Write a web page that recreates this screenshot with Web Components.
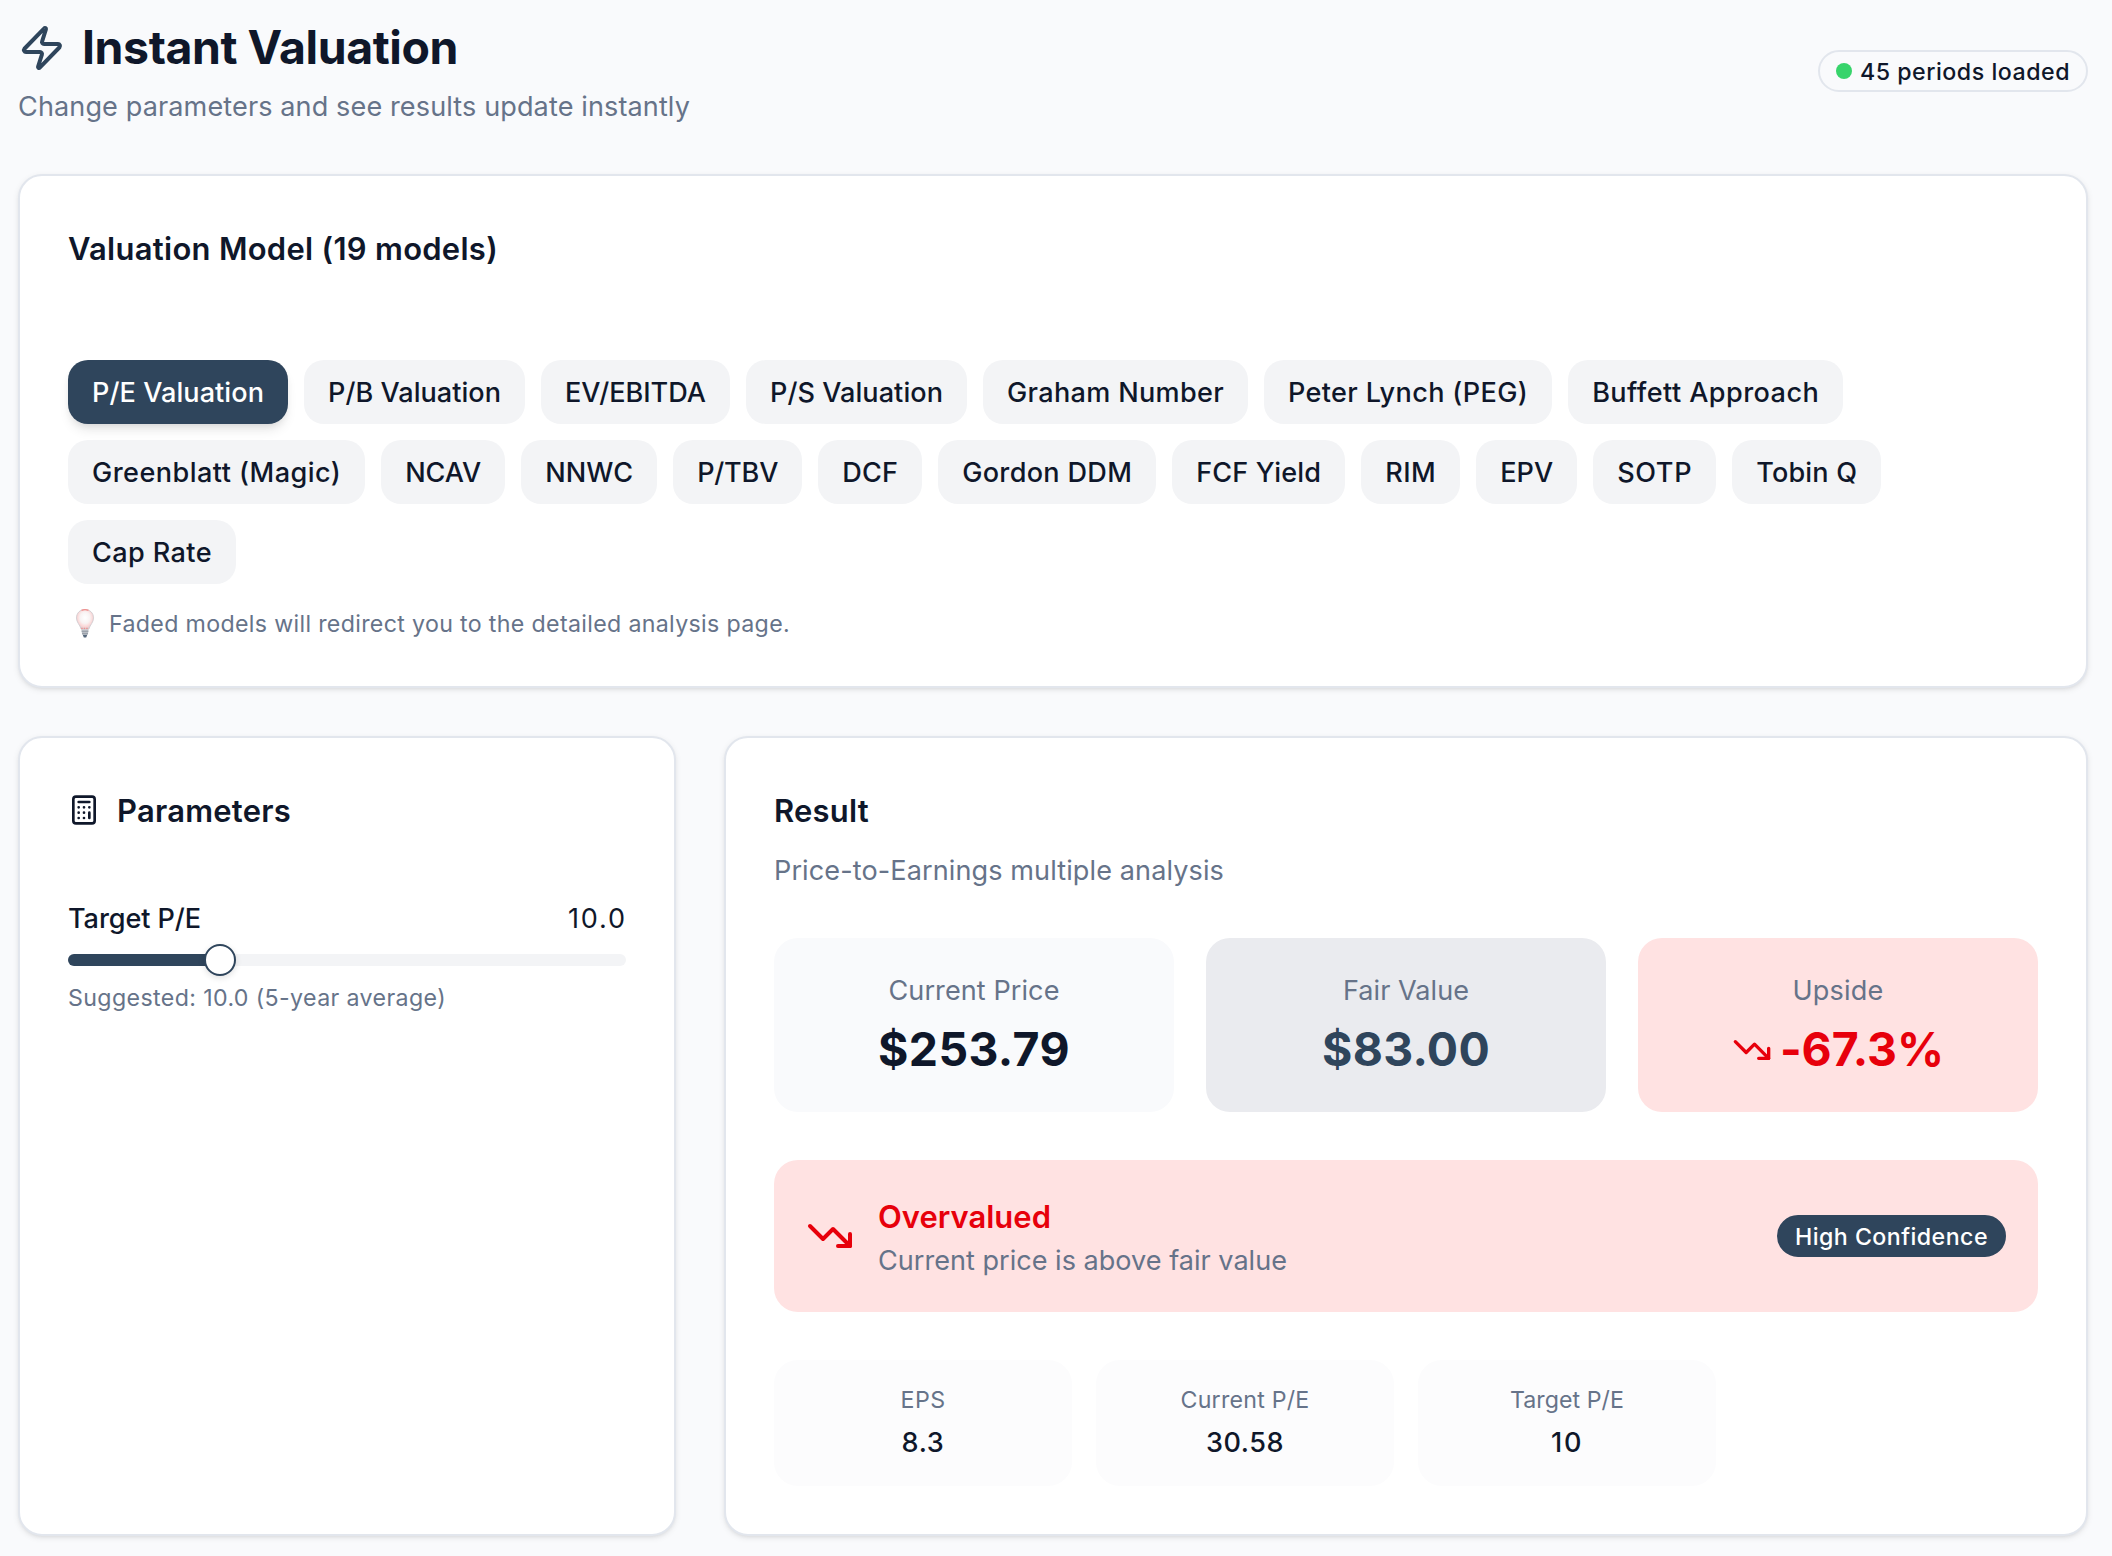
<!DOCTYPE html>
<html lang="en">
<head>
<meta charset="UTF-8">
<title>Instant Valuation</title>
<style>
  :root {
    --bg: #f9fafc;
    --card: #ffffff;
    --border: #e2e6ed;
    --text: #0f172a;
    --muted: #667389;
    --primary: #2f455c;
    --chip: #f3f4f6;
    --danger: #e7000b;
    --danger-bg: #ffe2e2;
  }

  body {
    margin: 0;
    background: var(--bg);
    color: var(--text);
    font-family: Inter, "Liberation Sans", sans-serif;
  }
</style>
</head>
<body>
<valuation-page></valuation-page>

<script>
/* Text line. Tracks its letters so the line takes the given advance width. */
class UiText extends HTMLElement {
  constructor() {
    super();
    this.attachShadow({ mode: 'open' });
  }

  connectedCallback() {
    const size = Number(this.getAttribute('size') || 28);
    const weight = this.getAttribute('weight') || 400;
    const line = Number(this.getAttribute('line') || 40);
    // moves the baseline inside the line without changing the line's height
    const shift = Number(this.getAttribute('shift') || (size === 28 ? 1 : 0));
    this.shadowRoot.innerHTML = `
      <style>
        :host {
          display: block;
          flex: none;
          width: max-content;
          font-size: ${size * 0.967}px;
          font-weight: ${weight};
          line-height: ${line + shift * 2}px;
          margin-bottom: ${-shift * 2}px;
          white-space: nowrap;
        }
      </style>
      <slot></slot>
    `;
    const target = Number(this.getAttribute('width'));
    if (target) {
      const natural = this.getBoundingClientRect().width;
      this.style.letterSpacing = `${(target - natural) / this.textContent.length}px`;
    }
  }
}

class UiIcon extends HTMLElement {
  constructor() {
    super();
    this.attachShadow({ mode: 'open' });
  }

  connectedCallback() {
    const size = this.getAttribute('size') || 32;
    this.shadowRoot.innerHTML = `
      <style>
        :host { display: block; flex: none; width: ${size}px; height: ${size}px; }
        svg { display: block; }
      </style>
      <svg width="${size}" height="${size}" viewBox="0 0 24 24" fill="none" stroke="currentColor"
        stroke-width="2" stroke-linecap="round" stroke-linejoin="round">
        ${this.getPaths(this.getAttribute('name'))}
      </svg>
    `;
  }

  getPaths(name) {
    if (name === 'zap') {
      return '<path d="M4 14a1 1 0 0 1-.78-1.63l9.9-10.2a.5.5 0 0 1 .86.46l-1.92 6.02A1 1 0 0 0 13 10h7a1 1 0 0 1 .78 1.63l-9.9 10.2a.5.5 0 0 1-.86-.46l1.92-6.02A1 1 0 0 0 11 14z"/>';
    }
    if (name === 'calculator') {
      return `
        <rect width="16" height="20" x="4" y="2" rx="2"/>
        <path d="M8 6h8M16 14v4M16 10h.01M12 10h.01M8 10h.01M12 14h.01M8 14h.01M12 18h.01M8 18h.01"/>
      `;
    }
    return '<path d="M16 17h6v-6"/><path d="m22 17-8.5-8.5-5 5L2 7"/>';
  }
}

class UiBulb extends HTMLElement {
  constructor() {
    super();
    this.attachShadow({ mode: 'open' });
    this.shadowRoot.innerHTML = `
      <style>
        :host { display: block; flex: none; width: 41px; height: 30px; }
        svg { display: block; }
      </style>
      <svg width="40" height="31" viewBox="0 0 40 31">
        <defs>
          <radialGradient id="glass" cx="50%" cy="42%" r="58%">
            <stop offset="0" stop-color="#ffffff"/>
            <stop offset=".5" stop-color="#f8f3f3"/>
            <stop offset=".8" stop-color="#fbd5d5"/>
            <stop offset="1" stop-color="#d6d0d3"/>
          </radialGradient>
        </defs>
        <path d="M17 1.500c-5 0-8.500 3.600-8.500 8.400 0 4.600 3.400 6.600 4.600 11.100h7.800c1.200-4.500 4.600-6.500 4.600-11.100 0-4.800-3.500-8.400-8.500-8.400z"
          fill="url(#glass)" stroke="#d5d0d4" stroke-width="1"/>
        <path d="M13.500 2.400q3.500-1.400 7 0" fill="none" stroke="#f28f8d" stroke-width="1.200"/>
        <path d="M13.200 20.500h7.600" stroke="#ef8f8f" stroke-width="1.400" stroke-dasharray="1.500 1"/>
        <path d="M13.400 21.600h7.200l-.7 5.200h-5.800z" fill="#b9bec4"/>
        <path d="M13.600 23.400h6.800M14 25.500h6" stroke="#8d949e" stroke-width=".7"/>
        <path d="M14.700 26.800h4.600l-1.100 2.600h-2.400z" fill="#56677b"/>
      </svg>
    `;
  }
}

class UiCard extends HTMLElement {
  constructor() {
    super();
    this.attachShadow({ mode: 'open' });
    this.shadowRoot.innerHTML = `
      <style>
        :host {
          display: block;
          box-sizing: border-box;
          padding: 48px;
          background: var(--card);
          border: 2px solid var(--border);
          border-radius: 24px;
          box-shadow: 0 2px 6px rgb(0 0 0 / 0.08), 0 2px 4px -2px rgb(0 0 0 / 0.1);
        }
      </style>
      <slot></slot>
    `;
  }
}

class ModelChip extends HTMLElement {
  constructor() {
    super();
    this.attachShadow({ mode: 'open' });
  }

  connectedCallback() {
    this.shadowRoot.innerHTML = `
      <style>
        :host {
          display: block;
          height: 64px;
          padding: 0 24px;
          background: var(--chip);
          border-radius: 20px;
        }
        :host([active]) {
          background: var(--primary);
          color: #fff;
          box-shadow: 0 8px 12px -2px rgb(0 0 0 / 0.09), 0 4px 8px -4px rgb(0 0 0 / 0.12);
        }
      </style>
      <ui-text size="28" weight="500" line="64" width="${this.getAttribute('width')}">${this.getAttribute('label')}</ui-text>
    `;
  }
}

class UiBadge extends HTMLElement {
  constructor() {
    super();
    this.attachShadow({ mode: 'open' });
    this.shadowRoot.innerHTML = `
      <style>
        :host {
          box-sizing: border-box;
          display: flex;
          flex: none;
          align-items: center;
          gap: 8px;
          height: 42px;
          padding: 0 16px;
          border: 2px solid var(--border);
          border-radius: 21px;
        }
        :host([solid]) {
          background: var(--primary);
          border-color: var(--primary);
          color: #fff;
        }
        .dot { width: 16px; height: 16px; border-radius: 50%; background: #37d46b; }
        :host([solid]) .dot { display: none; }
      </style>
      <div class="dot"></div>
      <slot></slot>
    `;
  }
}

class ParamSlider extends HTMLElement {
  constructor() {
    super();
    this.attachShadow({ mode: 'open' });
    this.shadowRoot.innerHTML = `
      <style>
        :host { display: block; }
        .label { display: flex; justify-content: space-between; height: 40px; }
        .value { margin-right: -1px; }
        .track {
          display: flex;
          align-items: center;
          height: 12px;
          margin: 16px 0;
          border-radius: 6px;
          background: var(--chip);
        }
        .fill { width: 152px; height: 12px; border-radius: 6px 0 0 6px; background: var(--primary); }
        .thumb {
          box-sizing: border-box;
          width: 32px;
          height: 32px;
          margin-left: -16px;
          border: 2px solid var(--primary);
          border-radius: 50%;
          background: #fff;
          box-shadow: 0 2px 6px rgb(0 0 0 / 0.12);
        }
        .hint { color: var(--muted); }
      </style>
      <div class="label">
        <ui-text weight="500" width="133">Target P/E</ui-text>
        <ui-text class="value" width="59">10.0</ui-text>
      </div>
      <div class="track"><div class="fill"></div><div class="thumb"></div></div>
      <ui-text class="hint" size="24" line="32" width="378">Suggested: 10.0 (5-year average)</ui-text>
    `;
  }
}

class MetricBox extends HTMLElement {
  constructor() {
    super();
    this.attachShadow({ mode: 'open' });
    this.shadowRoot.innerHTML = `
      <style>
        :host {
          display: flex;
          flex-direction: column;
          align-items: center;
          gap: 10px;
          padding: 32px;
          border-radius: 24px;
          background: var(--bg);
        }
        :host([tone="fair"]) { background: #eaebef; color: var(--primary); }
        :host([tone="down"]) { background: var(--danger-bg); color: var(--danger); }
        :host([small]) { gap: 6px; padding: 24px; background: #fcfcfd; }
        .label { display: flex; color: var(--muted); }
        .value { display: flex; align-items: center; gap: 8px; }
      </style>
      <div class="label"><slot name="label"></slot></div>
      <div class="value"><slot></slot></div>
    `;
  }
}

class ResultAlert extends HTMLElement {
  constructor() {
    super();
    this.attachShadow({ mode: 'open' });
    this.shadowRoot.innerHTML = `
      <style>
        :host {
          display: flex;
          align-items: center;
          gap: 24px;
          padding: 32px;
          border-radius: 24px;
          background: var(--danger-bg);
          color: var(--danger);
        }
        .body { flex: 1; height: 88px; }
        .note { color: var(--muted); }
      </style>
      <ui-icon name="trending-down" size="48"></ui-icon>
      <div class="body">
        <ui-text size="32" weight="600" line="48" width="173" shift="1">Overvalued</ui-text>
        <ui-text class="note" width="409">Current price is above fair value</ui-text>
      </div>
      <ui-badge solid><ui-text size="24" weight="500" line="36" width="193" shift="1">High Confidence</ui-text></ui-badge>
    `;
  }
}

class ValuationPage extends HTMLElement {
  constructor() {
    super();
    this.attachShadow({ mode: 'open' });
    // label, text width
    this.models = [
      ['P/E Valuation', 172], ['P/B Valuation', 173], ['EV/EBITDA', 141], ['P/S Valuation', 173],
      ['Graham Number', 217], ['Peter Lynch (PEG)', 240], ['Buffett Approach', 227],
      ['Greenblatt (Magic)', 249], ['NCAV', 76], ['NNWC', 88], ['P/TBV', 81], ['DCF', 56],
      ['Gordon DDM', 170], ['FCF Yield', 125], ['RIM', 51], ['EPV', 53], ['SOTP', 75],
      ['Tobin Q', 101], ['Cap Rate', 120]
    ];
  }

  connectedCallback() {
    this.shadowRoot.innerHTML = `
      <style>
        :host {
          display: flex;
          flex-direction: column;
          gap: 48px;
          box-sizing: border-box;
          height: 1556px;
          padding: 16px 24px 20px 18px;
        }
        header { display: flex; justify-content: space-between; align-items: center; height: 110px; }
        .intro { height: 110px; }
        .brand { display: flex; align-items: center; gap: 16px; height: 64px; }
        .brand ui-icon { color: var(--primary); }
        .brand ui-text { margin-top: -2px; }
        .muted { color: var(--muted); }
        .subtitle { margin-top: 6px; }
        .chips { display: flex; flex-wrap: wrap; gap: 16px; margin-top: 86px; }
        .hint { display: flex; height: 30px; margin-top: 24px; color: var(--muted); }
        .columns { display: grid; grid-template-columns: 658px 1fr; gap: 48px; flex: 1; }
        .heading { display: flex; align-items: center; gap: 17px; }
        .heading ui-icon { margin-top: -2px; }
        param-slider { margin-top: 62px; }
        .desc { margin-top: 14px; }
        .metrics { display: grid; grid-template-columns: repeat(3, 1fr); gap: 32px; margin: 48px 0; }
        .details { display: grid; grid-template-columns: repeat(4, 1fr); gap: 24px; margin-top: 48px; }
      </style>

      <header>
        <div class="intro">
          <div class="brand">
            <ui-icon name="zap" size="48"></ui-icon>
            <ui-text size="48" weight="700" line="64" width="376">Instant Valuation</ui-text>
          </div>
          <ui-text class="muted subtitle" width="672">Change parameters and see results update instantly</ui-text>
        </div>
        <ui-badge><ui-text size="24" weight="500" line="36" width="210" shift="1">45 periods loaded</ui-text></ui-badge>
      </header>

      <ui-card>
        <ui-text size="32" weight="600" line="50" width="430">Valuation Model (19 models)</ui-text>
        <div class="chips">
          ${this.models.map(([label, width], i) =>
            `<model-chip label="${label}" width="${width}" ${i === 0 ? 'active' : ''}></model-chip>`
          ).join('')}
        </div>
        <div class="hint">
          <ui-bulb></ui-bulb>
          <ui-text size="24" line="30" width="681" shift="1">Faded models will redirect you to the detailed analysis page.</ui-text>
        </div>
      </ui-card>

      <div class="columns">
        <ui-card>
          <div class="heading">
            <ui-icon name="calculator" size="32"></ui-icon>
            <ui-text size="32" weight="600" line="50" width="174">Parameters</ui-text>
          </div>
          <param-slider></param-slider>
        </ui-card>

        <ui-card>
          <ui-text size="32" weight="600" line="50" width="95">Result</ui-text>
          <ui-text class="muted desc" width="450">Price-to-Earnings multiple analysis</ui-text>
          <div class="metrics">
            <metric-box>
              <ui-text slot="label" width="171">Current Price</ui-text>
              <ui-text size="48" weight="700" line="60" width="192" shift="-1">$253.79</ui-text>
            </metric-box>
            <metric-box tone="fair">
              <ui-text slot="label" width="126">Fair Value</ui-text>
              <ui-text size="48" weight="700" line="60" width="168" shift="-1">$83.00</ui-text>
            </metric-box>
            <metric-box tone="down">
              <ui-text slot="label" width="91">Upside</ui-text>
              <ui-icon name="trending-down" size="40"></ui-icon>
              <ui-text size="48" weight="700" line="60" width="164" shift="-1">-67.3%</ui-text>
            </metric-box>
          </div>
          <result-alert></result-alert>
          <div class="details">
            <metric-box small>
              <ui-text slot="label" size="24" line="32" width="45">EPS</ui-text>
              <ui-text weight="500" width="43">8.3</ui-text>
            </metric-box>
            <metric-box small>
              <ui-text slot="label" size="24" line="32" width="129">Current P/E</ui-text>
              <ui-text weight="500" width="78">30.58</ui-text>
            </metric-box>
            <metric-box small>
              <ui-text slot="label" size="24" line="32" width="114">Target P/E</ui-text>
              <ui-text weight="500" width="32">10</ui-text>
            </metric-box>
          </div>
        </ui-card>
      </div>
    `;
  }
}

customElements.define('ui-text', UiText);
customElements.define('ui-icon', UiIcon);
customElements.define('ui-bulb', UiBulb);
customElements.define('ui-card', UiCard);
customElements.define('ui-badge', UiBadge);
customElements.define('model-chip', ModelChip);
customElements.define('param-slider', ParamSlider);
customElements.define('metric-box', MetricBox);
customElements.define('result-alert', ResultAlert);
customElements.define('valuation-page', ValuationPage);
</script>
</body>
</html>
